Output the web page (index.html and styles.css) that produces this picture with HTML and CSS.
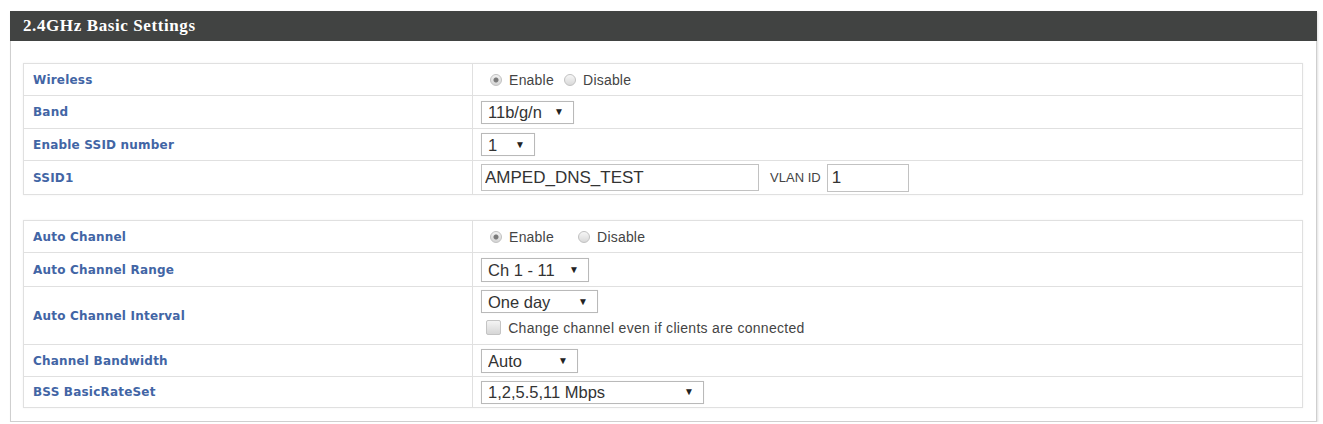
FILE: index.html
```html
<!DOCTYPE html>
<html lang="en">
<head>
  <meta charset="UTF-8">
  <title>2.4GHz Basic Settings</title>
  <link rel="stylesheet" href="styles.css">
</head>
<body>

  <!-- 2.4GHz basic settings -->
  <div class="panel">
    <div class="panel-title">2.4GHz Basic Settings</div>
    <div class="panel-body">

      <table class="settings">
        <tr class="h31">
          <td class="label">Wireless</td>
          <td class="field">
            <label class="opt"><input type="radio" name="wireless" checked> Enable</label>
            <label class="opt"><input type="radio" name="wireless"> Disable</label>
          </td>
        </tr>
        <tr class="h32">
          <td class="label">Band</td>
          <td class="field">
            <span class="select" style="width: 93px;">
              <select><option>11b/g/n</option></select>
            </span>
          </td>
        </tr>
        <tr class="h31">
          <td class="label">Enable SSID number</td>
          <td class="field">
            <span class="select" style="width: 54px;">
              <select><option>1</option></select>
            </span>
          </td>
        </tr>
        <tr class="h33">
          <td class="label">SSID1</td>
          <td class="field">
            <input type="text" class="text-field ssid" value="AMPED_DNS_TEST">
            <span class="vlan">VLAN ID</span>
            <input type="text" class="text-field vlan-id" value="1">
          </td>
        </tr>
      </table>

      <table class="settings second">
        <tr class="h31">
          <td class="label">Auto Channel</td>
          <td class="field">
            <label class="opt"><input type="radio" name="autoch" checked> Enable</label>
            <label class="opt wide"><input type="radio" name="autoch"> Disable</label>
          </td>
        </tr>
        <tr class="h33">
          <td class="label">Auto Channel Range</td>
          <td class="field">
            <span class="select tall" style="width: 108px;">
              <select><option>Ch 1 - 11</option></select>
            </span>
          </td>
        </tr>
        <tr class="h57">
          <td class="label">Auto Channel Interval</td>
          <td class="field top">
            <div class="select-line">
              <span class="select" style="width: 117px;">
                <select><option>One day</option></select>
              </span>
            </div>
            <div class="check-line">
              <label><input type="checkbox"> Change channel even if clients are connected</label>
            </div>
          </td>
        </tr>
        <tr class="h31">
          <td class="label">Channel Bandwidth</td>
          <td class="field">
            <span class="select tall" style="width: 97px;">
              <select><option>Auto</option></select>
            </span>
          </td>
        </tr>
        <tr class="h30">
          <td class="label">BSS BasicRateSet</td>
          <td class="field">
            <span class="select" style="width: 223px;">
              <select><option>1,2,5.5,11 Mbps</option></select>
            </span>
          </td>
        </tr>
      </table>

    </div>
  </div>

</body>
</html>
```

FILE: styles.css
```css
/* Общие стили */
body {
  margin: 0;
  padding: 11px 0 0 10px;
  background: #fff;
  font-family: "Liberation Sans", Arial, sans-serif;
  color: #333;
}

/* Панель с заголовком */
.panel {
  width: 1307px;
  box-sizing: border-box;
  border: 1px solid #cfcfcf;
  border-top: none;
  box-shadow: 1px 1px 2px rgba(0, 0, 0, 0.12);
}

.panel-title {
  height: 30px;
  margin: 0 -1px;
  padding-left: 13px;
  display: flex;
  align-items: center;
  background-color: #414342;
  color: #fff;
  font-family: "Liberation Serif", "Times New Roman", serif;
  font-weight: bold;
  font-size: 17px;
  letter-spacing: 0.6px;
}

.panel-body {
  padding: 22px 13px 13px 12px;
}

/* Таблицы настроек */
.settings {
  width: 100%;
  border-collapse: collapse;
  box-shadow: 0 0 2px rgba(0, 0, 0, 0.06);
}

.settings.second {
  margin-top: 25px;
}

.settings td {
  border: 1px solid #e0e0e0;
  vertical-align: middle;
}

.h30 td { height: 30px; }
.h31 td { height: 31px; }
.h32 td { height: 32px; }
.h33 td { height: 33px; }
.h57 td { height: 57px; }

.settings .label {
  width: 430px;
  padding: 0 9px;
  color: #4265a5;
  font-family: "DejaVu Sans", Verdana, sans-serif;
  font-weight: bold;
  font-size: 12px;
  letter-spacing: 0.2px;
}

.settings .field {
  padding: 0 8px;
  font-size: 14px;
  letter-spacing: 0.2px;
  color: #444;
}

.settings .field.top {
  vertical-align: top;
}

/* Радио-кнопки */
.opt input {
  appearance: none;
  -webkit-appearance: none;
  width: 12px;
  height: 12px;
  margin: 0 3px 0 6px;
  border: 1px solid #c2c2c2;
  border-radius: 50%;
  background: linear-gradient(#f6f6f6, #d9d9d9);
  vertical-align: -1px;
  box-sizing: border-box;
}

.opt input:checked {
  background: radial-gradient(circle, #7a7a7a 0 2px, transparent 3px), linear-gradient(#f2f2f2, #d4d4d4);
}

.opt:first-child input {
  margin-left: 9px;
}

.opt.wide input {
  margin-left: 20px;
}

/* Выпадающие списки */
.select-line {
  height: 23px;
  margin-top: 3px;
  line-height: 0;
}

.select {
  display: inline-block;
  position: relative;
  height: 23px;
  border: 1px solid #b9b9b9;
  box-sizing: border-box;
  background: #fff;
  vertical-align: middle;
  box-shadow: 0 0 1px rgba(0, 0, 0, 0.08);
}

.select.tall {
  height: 24px;
}

.select select {
  appearance: none;
  -webkit-appearance: none;
  width: 100%;
  height: 100%;
  border: none;
  background: transparent;
  padding: 0 20px 0 6px;
  font-family: "Liberation Sans", Arial, sans-serif;
  font-size: 16.5px;
  color: #333;
  outline: none;
}

.select::after {
  content: "\25BC";
  position: absolute;
  right: 9px;
  top: 50%;
  transform: translateY(-50%);
  font-size: 10px;
  line-height: 1;
  color: #222;
  pointer-events: none;
}

/* Поля ввода */
.text-field {
  box-sizing: border-box;
  border: 1px solid #c2c2c2;
  padding: 0 3px;
  font-family: "Liberation Sans", Arial, sans-serif;
  font-size: 17px;
  color: #333;
  vertical-align: middle;
}

.text-field.ssid {
  width: 278px;
  height: 27px;
}

.text-field.vlan-id {
  width: 82px;
  height: 28px;
  padding-left: 4px;
}

.vlan {
  margin: 0 2px 0 7px;
  font-size: 13px;
  letter-spacing: 0;
  vertical-align: middle;
}

/* Флажок */
.check-line {
  margin-top: 6px;
  height: 18px;
  line-height: 18px;
  font-size: 14px;
  letter-spacing: 0.3px;
}

.check-line input {
  appearance: none;
  -webkit-appearance: none;
  width: 15px;
  height: 15px;
  margin: 0 3px 0 5px;
  border: 1px solid #c4c4c4;
  border-radius: 2px;
  background: linear-gradient(#f4f4f4, #d6d6d6);
  vertical-align: -2px;
  box-sizing: border-box;
}
```
